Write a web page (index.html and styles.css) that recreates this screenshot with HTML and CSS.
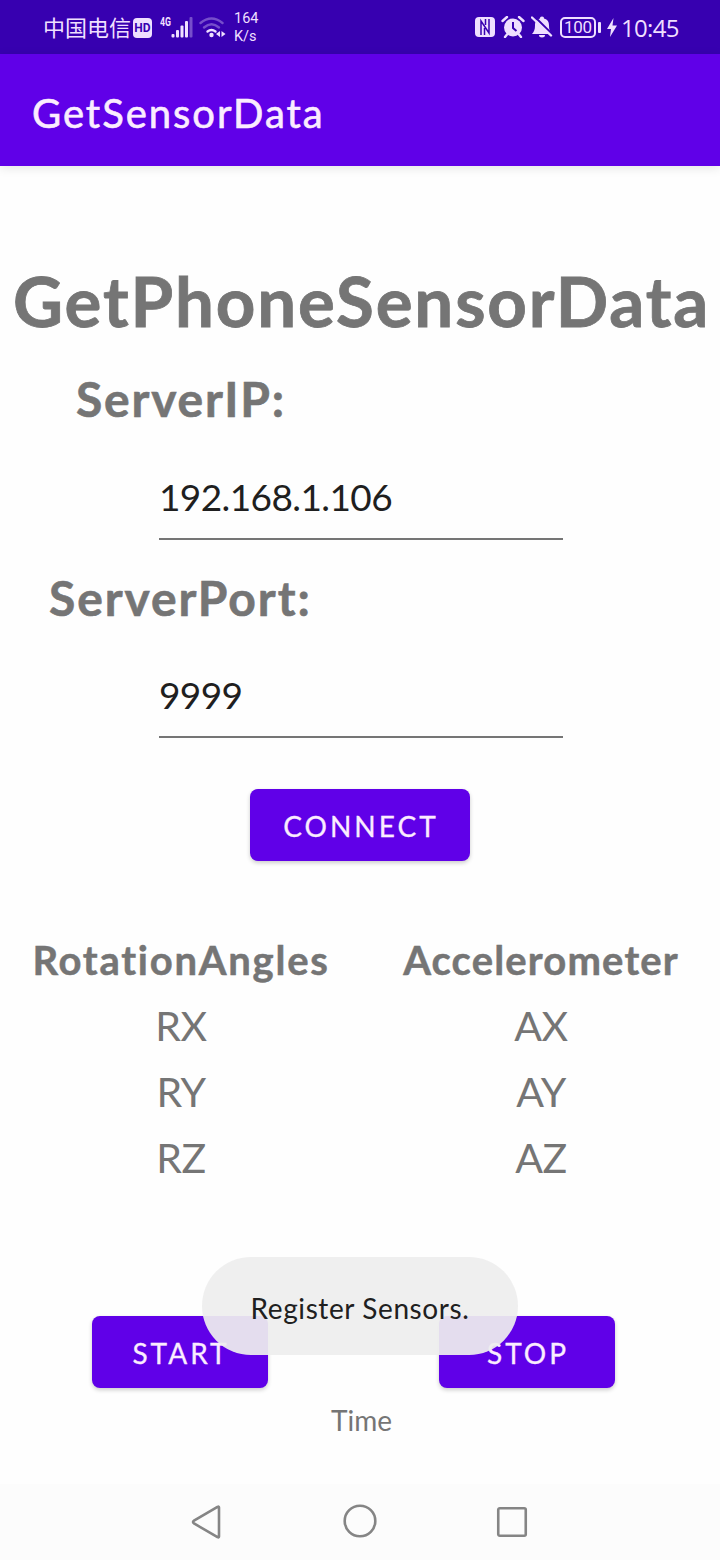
FILE: index.html
```
<!DOCTYPE html>
<html lang="en">
<head>
<meta charset="utf-8">
<title>GetSensorData</title>
<link rel="stylesheet" href="styles.css">
</head>
<body>
<div class="phone">
  <header class="status">
    <div class="status-left">
      <span class="carrier">中国电信</span>
      <span class="hd">HD</span>
      <svg class="signal" width="34" height="28" viewBox="0 0 34 28">
        <g class="ink"><rect x="11.500" y="20" width="3" height="3.500" rx="1"/><rect x="16" y="16" width="3" height="7.500" rx="1"/><rect x="20.500" y="11.500" width="3" height="12" rx="1"/><rect x="25" y="7" width="3" height="16.500" rx="1"/><rect class="dim" x="29.500" y="3" width="3" height="20.500" rx="1"/></g>
        <text class="net" x="0" y="12" textLength="11" lengthAdjust="spacingAndGlyphs">4G</text>
      </svg>
      <svg class="wifi" width="28" height="24" viewBox="0 0 28 24">
        <g class="arc"><path class="dim" d="M1.500 7Q12.500-2 23.500 7"/><path class="dim" d="M5 11.500Q12.500 5 20 11.500"/><path d="M8.500 15.500Q12.500 12.500 16.500 15.500"/></g>
        <circle class="ink" cx="12.500" cy="19" r="2.200"/>
        <path class="ink" d="M21 15v6l-4-3zM22.500 15v6l4-3z"/>
      </svg>
      <div class="speed"><span>164</span><span>K/s</span></div>
    </div>
    <div class="status-right">
      <svg width="20" height="20" viewBox="0 0 20 20"><rect class="ink" width="20" height="20" rx="4"/><path class="cut" d="M6 18V4l8 12V2M9.500 18v-7M10.500 2v6"/></svg>
      <svg class="alarm" width="24" height="22" viewBox="0 0 24 22"><circle class="ink" cx="12" cy="11.500" r="9"/><path class="arc" d="M1.500 5L6 1M22.500 5L18 1M6 18.500L4 21M18 18.500L20 21"/><path class="cut" d="M12 6v6l3.500 3"/></svg>
      <svg class="bell" width="22" height="22" viewBox="0 0 22 22"><path class="ink" d="M11 .500c1.500 0 2 .8 2 2 3.800.8 5 3.500 5 7 0 4 .8 6 3 8.500H1c2.200-2.500 3-4.500 3-8.500 0-3.500 1.200-6.200 5-7 0-1.200.5-2 2-2zM8 19h6c0 1.800-1.300 2.500-3 2.500S8 20.800 8 19z"/><path class="slash-gap" d="M3 0l19 19"/><path class="arc" d="M1 1.500l19 18"/></svg>
      <span class="battery">100</span><i class="battery-tip"></i>
      <svg class="bolt" width="10" height="19" viewBox="0 0 10 19"><path class="ink" d="M6.500 0L0 11h4L3 19l7-11.500H5.500z"/></svg>
      <span class="clock">10:45</span>
    </div>
  </header>
  <div class="appbar">GetSensorData</div>
  <main class="content">
    <h1 class="headline">GetPhoneSensorData</h1>
    <label class="label ip-label">ServerIP:</label>
    <div class="field"><span class="ip">192.168.1.106</span></div>
    <label class="label port-label">ServerPort:</label>
    <div class="field"><span class="port">9999</span></div>
    <div class="button connect">CONNECT</div>
    <section class="readings">
      <div class="column">
        <h2 class="rotation">RotationAngles</h2><p>RX</p><p>RY</p><p>RZ</p>
      </div>
      <div class="column">
        <h2 class="accel">Accelerometer</h2><p>AX</p><p>AY</p><p>AZ</p>
      </div>
    </section>
    <div class="controls">
      <div class="button">START</div>
      <div class="button">STOP</div>
    </div>
    <p class="time">Time</p>
  </main>
  <nav class="navbar">
    <svg width="32" height="34" viewBox="0 0 32 34"><path d="M29 2.500v29Q29 33 27.500 32L4 18.500Q2 17 4 15.600L27.500 2Q29 1 29 2.500z"/></svg>
    <svg class="home" width="34" height="34" viewBox="0 0 34 34"><circle cx="17" cy="17" r="15.300"/></svg>
    <svg width="32" height="32" viewBox="0 0 32 32"><rect x="2.250" y="2.250" width="27.500" height="27.500" rx="1.500"/></svg>
  </nav>
  <div class="toast">Register Sensors.</div>
</div>
</body>
</html>
```

FILE: styles.css
```
* { box-sizing: border-box; }
body { margin: 0; font-family: Lato, "Noto Sans CJK SC", sans-serif; background: #fff; font-variant-ligatures: none; }
h1, h2, p { margin: 0; }
.phone { position: relative; display: flex; flex-direction: column; width: 720px; height: 1560px; overflow: hidden; background: #fefefe; }

.status { display: flex; justify-content: space-between; height: 54px; padding: 0 41px 0 43px; background: #3700b0; color: #efdfff; }
.status-left, .status-right { display: flex; align-items: center; }
.carrier { font: 22px/30px "Noto Sans CJK SC", sans-serif; white-space: nowrap; width: 88px; margin-top: -2px; }
.hd { width: 19px; height: 20px; margin: 2px 0 0 2px; border-radius: 4px; background: #efdfff; color: #3700b0; font: 700 12px/20px Roboto, sans-serif; text-align: center; }
.signal { margin: 2px 0 0 8px; }
.net { font: 700 12px Roboto, sans-serif; fill: #efdfff; }
.wifi { margin: 2px 0 0 5px; }
.ink { fill: #efdfff; }
.arc { fill: none; stroke: #efdfff; stroke-width: 2.4; stroke-linecap: round; }
.dim { opacity: .35; }
.cut { fill: none; stroke: #3700b0; stroke-width: 1.500; }
.alarm .cut { stroke-width: 2; }
.slash-gap { stroke: #3700b0; stroke-width: 2; }
.speed { display: flex; flex-direction: column; margin: 2px 0 0 7px; font: 14.500px/18px Roboto, sans-serif; }
.alarm { margin-left: 6px; }
.bell { margin-left: 6px; }
.battery { width: 36px; height: 21px; margin-left: 7px; border: 2px solid #efdfff; border-radius: 5px; font: 17px/17px Roboto, sans-serif; letter-spacing: -.3px; text-align: center; }
.battery-tip { width: 3px; height: 11px; margin-left: 2px; border-radius: 1px; background: #efdfff; }
.bolt { margin-left: 6px; }
.clock { margin: 2px 0 0 4px; font: 24px/30px "Open Sans", sans-serif; width: 58px; letter-spacing: -.700px; white-space: nowrap; }

.appbar { height: 112px; padding: 0 32px; background: #6000e8; color: #fbecff; font-size: 40px; line-height: 119px; letter-spacing: 1.950px; -webkit-text-stroke: .6px; box-shadow: 0 2px 10px rgba(0,0,0,.1); }

.content { display: flex; flex-direction: column; height: 1318px; padding-top: 88px; color: #757575; }
.headline { height: 92px; padding-left: 13px; font-size: 69px; line-height: 94px; font-weight: 700; letter-spacing: 1.870px; -webkit-text-stroke: .8px; white-space: nowrap; }
.label { height: 64px; font-size: 48px; font-weight: 700; line-height: 67px; letter-spacing: 1.800px; -webkit-text-stroke: .6px; }
.ip-label { margin: 19px 0 0 76px; }
.port-label { margin: 24px 0 0 49px; letter-spacing: 1.900px; }
.field { width: 404px; height: 82px; margin: 29px 0 0 159px; border-bottom: 2px solid #757575; color: #1f1f1f; font-size: 37px; line-height: 78px; letter-spacing: -.6px; }
.port-label + .field { margin-top: 28px; }
.button { height: 72px; border-radius: 8px; background: #6000e8; color: #fbecff; font-size: 28px; line-height: 75px; letter-spacing: 3px; text-indent: 2px; text-align: center; -webkit-text-stroke: .3px; box-shadow: 0 2px 4px rgba(0,0,0,.2); }
.connect { width: 220px; margin: 51px 0 0 250px; }
.readings { display: grid; grid-template-columns: 360px 360px; margin-top: 65px; padding-left: 1px; }
.column { text-align: center; font-size: 41px; line-height: 67px; }
.column p { height: 66px; letter-spacing: -.5px; }
.column h2 { font-size: 40px; font-weight: 700; line-height: 68px; height: 66px; -webkit-text-stroke: .5px; }
.rotation { letter-spacing: 1.750px; }
.accel { letter-spacing: 1.150px; }
.controls { display: flex; gap: 171px; margin: 126px 0 0 92px; }
.controls .button { width: 176px; }
.time { margin-top: 14px; padding-left: 3px; font-size: 28px; line-height: 36px; text-align: center; }

.navbar { display: flex; align-items: center; justify-content: space-between; height: 76px; padding: 0 192px 0 190px; background: #fcfcfc; }
.navbar svg { fill: none; stroke: #858585; stroke-width: 2.600; }
.navbar .home { margin: 0 0 2px 2px; }
.toast { position: absolute; left: 202px; top: 1257px; width: 316px; height: 98px; border-radius: 49px; background: rgba(238,238,238,.93); color: #202020; font-size: 28px; line-height: 102px; letter-spacing: .6px; text-align: center; }
```
